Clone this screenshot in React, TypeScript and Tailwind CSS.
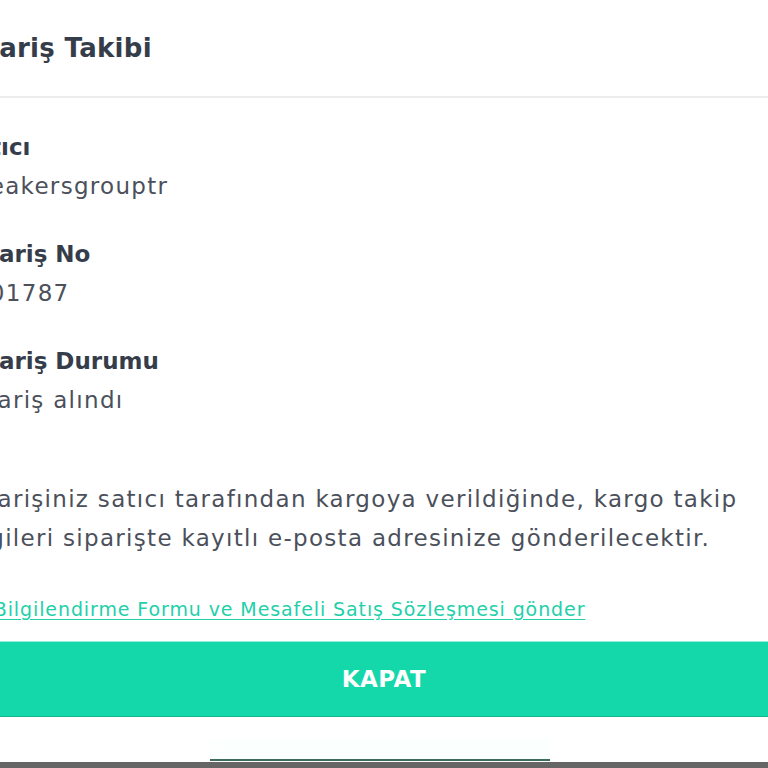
import React from 'react';

const font = { fontFamily: '"DejaVu Sans", "Noto Sans", sans-serif' };

const rows = [
  { label: 'Satıcı', value: 'Sneakersgrouptr' },
  { label: 'Sipariş No', value: '2701787' },
  { label: 'Sipariş Durumu', value: 'Sipariş alındı' },
];

const App = () => {
  return (
    <div className="h-screen w-full overflow-hidden bg-[#666666]" style={font}>
      <div className="h-[762px] w-full overflow-hidden bg-white">
        <div className="ml-[-42px] w-[900px]">
          {/* header */}
          <div className="flex h-[98px] items-center border-b-2 border-[#ededed]">
            <h2 className="ml-[-6px] text-[26px] font-bold tracking-[0.3px] text-[#363d4a]">Sipariş Takibi</h2>
          </div>

          {/* body */}
          <div className="flex flex-col pt-[30px]">
            <div className="flex flex-col gap-[29px]">
              {rows.map((r) => (
                <div key={r.label} className="flex flex-col">
                  <span className="text-[23px] font-bold leading-[39px] text-[#363d4a]">{r.label}</span>
                  <span className="text-[23px] leading-[39px] tracking-[1.3px] text-[#4b505b]">{r.value}</span>
                </div>
              ))}
            </div>

            <p className="mt-[60px] w-[880px] text-[23px] leading-[39px] tracking-[1.3px] text-[#4b505b]">
              Siparişiniz satıcı tarafından kargoya verildiğinde, kargo takip
              <br />
              bilgileri siparişte kayıtlı e-posta adresinize gönderilecektir.
            </p>

            <a className="mt-[36px] text-[19px] leading-[30px] tracking-[0.9px] text-[#1fd0aa] underline underline-offset-[3px]">
              Ön Bilgilendirme Formu ve Mesafeli Satış Sözleşmesi gönder
            </a>

            <button className="mt-[17px] flex h-[76px] w-[852px] items-center justify-center border-t border-b border-t-[#8ff0d8] border-b-[#10b892] bg-[#14d7aa] text-[23px] font-bold tracking-[0.5px] text-white">
              KAPAT
            </button>
          </div>

          <div className="mt-[22px] ml-[252px] h-[22px] w-[340px] border-b-2 border-[#3d6b5e] bg-[#fbfffe]" />
        </div>
      </div>
    </div>
  );
};

export default App;
